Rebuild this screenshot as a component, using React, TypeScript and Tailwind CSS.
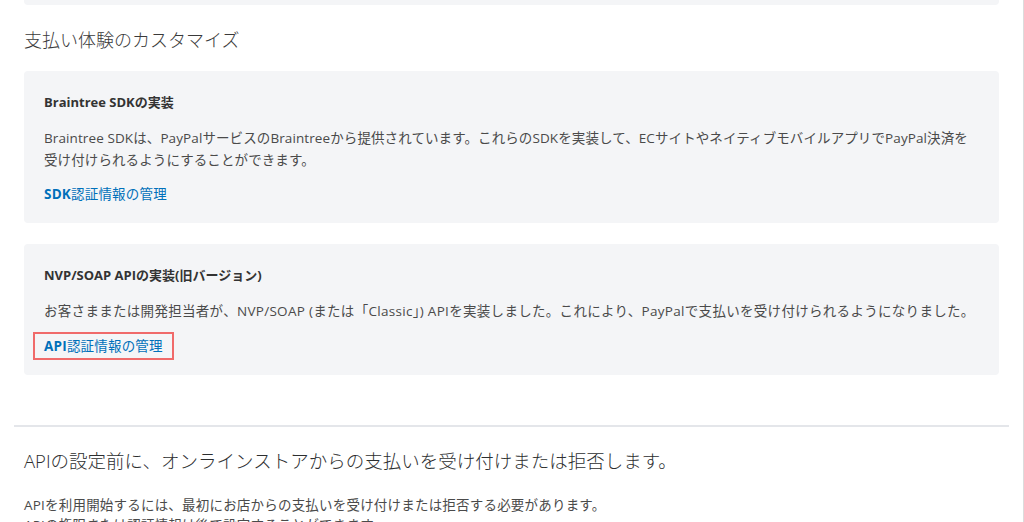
import React from "react";

const font = { fontFamily: '"Open Sans", "Noto Sans CJK JP", sans-serif' };

export default function App() {
  return (
    <div
      className="w-[1024px] h-[522px] overflow-hidden bg-white border-r border-[#dcdcdc] font-['Open_Sans','Noto_Sans_CJK_JP',sans-serif]"
      style={font}
    >
      <div className="ml-[24px] w-[975px] flex flex-col">
        <div className="h-[5px] bg-[#f4f5f7] rounded-b-[4px]" />

        <h2 className="mt-[23px] text-[18px] leading-[24px] font-light text-[#3a3a3a]">
          支払い体験のカスタマイズ
        </h2>

        <div className="mt-[19px] bg-[#f4f5f7] rounded-[4px] px-[20px] pt-[21px] pb-[19px]">
          <div className="text-[13px] leading-[20px] font-bold text-[#333]">Braintree SDKの実装</div>
          <p className="mt-[15px] text-[13.5px] leading-[22px] tracking-[0.1px] text-[#4a4a4a] whitespace-nowrap">
            Braintree SDKは、PayPalサービスのBraintreeから提供されています。これらのSDKを実装して、ECサイトやネイティブモバイルアプリでPayPal決済を
            <br />
            受け付けられるようにすることができます。
          </p>
          <a className="block mt-[13px] text-[13.5px] leading-[20px] tracking-[0.2px] text-[#0070ba]">
            <span className="font-bold">SDK</span>認証情報の管理
          </a>
        </div>

        <div className="mt-[21px] bg-[#f4f5f7] rounded-[4px] px-[20px] pt-[21px] pb-[15px]">
          <div className="text-[13px] leading-[20px] font-bold text-[#333]">NVP/SOAP APIの実装(旧バージョン)</div>
          <p className="mt-[15px] text-[13.5px] leading-[22px] tracking-[0.3px] text-[#4a4a4a]">
            お客さままたは開発担当者が、NVP/SOAP (または「Classic」) APIを実装しました。これにより、PayPalで支払いを受け付けられるようになりました。
          </p>
          <div className="mt-[10px] -ml-[11px] flex">
            <a className="border-2 border-[#f06a6a] px-[9px] py-[2px] text-[13.5px] leading-[20px] tracking-[0.2px] text-[#0070ba]">
              <span className="font-bold">API</span>認証情報の管理
            </a>
          </div>
        </div>

        <div className="mt-[50px] -mx-[10px] h-[2px] bg-[#e4e6ea]" />

        <h2 className="mt-[21px] text-[18.5px] leading-[26px] font-light text-[#2c2e2f]">
          APIの設定前に、オンラインストアからの支払いを受け付けまたは拒否します。
        </h2>
        <p className="mt-[21px] text-[13.5px] leading-[20px] tracking-[0.2px] text-[#4a4a4a]">
          APIを利用開始するには、最初にお店からの支払いを受け付けまたは拒否する必要があります。
          <br />
          APIの権限または認証情報は後で設定することができます。
        </p>
      </div>
    </div>
  );
}
